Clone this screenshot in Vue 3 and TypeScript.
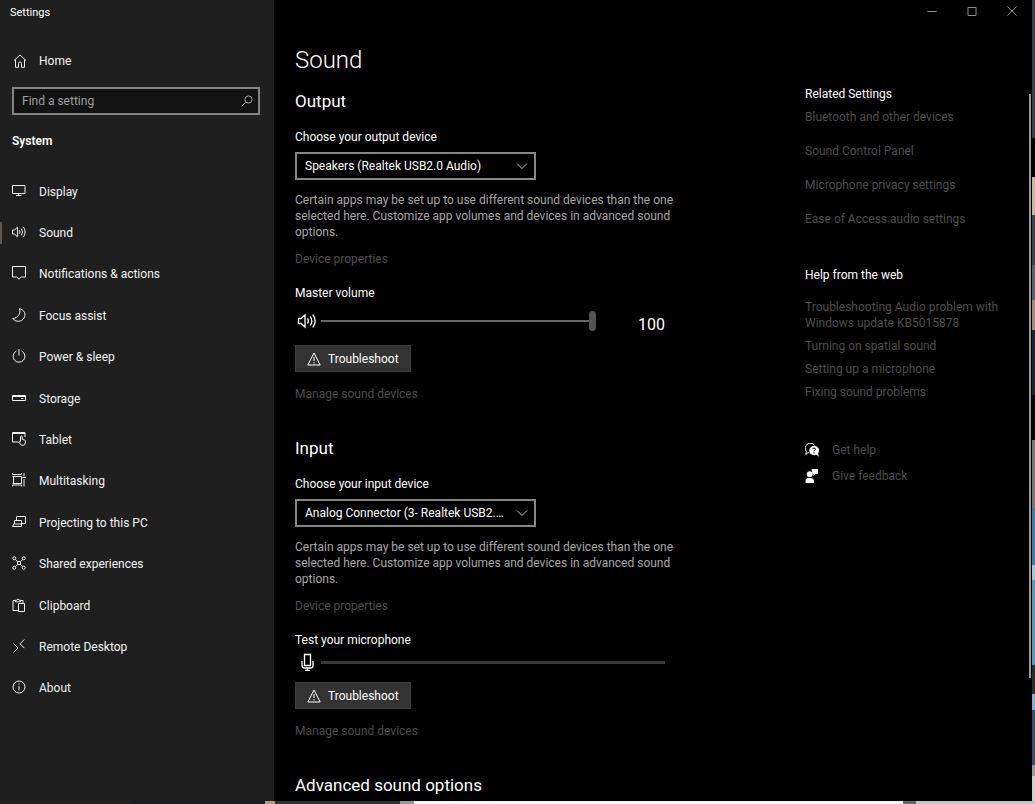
<script setup lang="ts">
import { ref } from 'vue'

interface NavItem {
  id: string
  label: string
}

const navItems: NavItem[] = [
  { id: 'display', label: 'Display' },
  { id: 'sound', label: 'Sound' },
  { id: 'notifications', label: 'Notifications & actions' },
  { id: 'focus', label: 'Focus assist' },
  { id: 'power', label: 'Power & sleep' },
  { id: 'storage', label: 'Storage' },
  { id: 'tablet', label: 'Tablet' },
  { id: 'multitasking', label: 'Multitasking' },
  { id: 'projecting', label: 'Projecting to this PC' },
  { id: 'shared', label: 'Shared experiences' },
  { id: 'clipboard', label: 'Clipboard' },
  { id: 'remote', label: 'Remote Desktop' },
  { id: 'about', label: 'About' },
]

const relatedLinks = [
  'Bluetooth and other devices',
  'Sound Control Panel',
  'Microphone privacy settings',
  'Ease of Access audio settings',
]

const helpLinks = [
  'Troubleshooting Audio problem with Windows update KB5015878',
  'Turning on spatial sound',
  'Setting up a microphone',
  'Fixing sound problems',
]

const active = ref('sound')
const search = ref('')
const volume = ref(100)
const outputDevice = ref('Speakers (Realtek USB2.0 Audio)')
const inputDevice = ref('Analog Connector (3- Realtek USB2.0 Audio)')
</script>

<template>
  <div class="desktop">
    <div class="window">
      <aside class="sidebar">
        <div class="app-title">Settings</div>
        <a href="#" class="home">
          <svg class="icon" viewBox="0 0 14 14"><path d="M1 6.600 7 1l6 5.600M2.500 5.500v7.800h3V9.500q0-1.500 1.500-1.500t1.500 1.500v3.800h3V5.500" /></svg>
          <span>Home</span>
        </a>
        <div class="search">
          <input v-model="search" type="text" placeholder="Find a setting" aria-label="Find a setting" />
          <svg class="search-icon" viewBox="0 0 12 12"><circle cx="7.500" cy="4.500" r="3.600" /><path d="M4.900 7.100.7 11.300" /></svg>
        </div>
        <h2 class="group">System</h2>
        <nav class="nav">
          <a
            v-for="item in navItems"
            :key="item.id"
            href="#"
            :class="{ active: active === item.id }"
            @click.prevent="active = item.id"
          >
            <svg class="icon" viewBox="0 0 14 14">
              <path v-if="item.id === 'display'" d="M.5 1.500h12.500v8H.5zM6.700 9.500v2M4 11.500h5.500" />
              <path v-else-if="item.id === 'sound'" d="M.5 5h2l3-2.800v9.600L2.500 9h-2zM7.300 5.200q1.200 1.800 0 3.600M9.300 3.500q2.400 3.500 0 7M11.300 1.800q3.600 5.200 0 10.400" />
              <path v-else-if="item.id === 'notifications'" d="M.5.500h13v10.500H9.300L7 13.200 4.700 11H.5z" />
              <path v-else-if="item.id === 'focus'" d="M7.500.7C9 5.500 6 10 .7 10.500c3 4 9 3.600 11.300-.5 2.200-3.700.6-8-4.500-9.300z" />
              <path v-else-if="item.id === 'power'" d="M7 0v6.500M4.400 2a5.900 5.900 0 1 0 5.200 0" />
              <path v-else-if="item.id === 'storage'" d="M.5 4.500h13v5H.5zM.5 5.500h13M9 7.500h2.500" />
              <g v-else-if="item.id === 'tablet'">
                <path d="M6 10H.5V.5H13V5M.5 1.500H13" />
                <path d="M8.500 9.500V4.500q.9-1 1.800 0v3l2.400.6q.9.300.8 1.200l-.6 3q-.4.900-1.300.9H9.300L6.500 10q.6-1.300 2-.2" />
              </g>
              <path v-else-if="item.id === 'multitasking'" d="M.5 0v1.500h9V0M1.500 3.500v7M.5 3.500h9v7h-9M.5 13.500V12h9v1.500M12 0v3.500M12 6v7.500M10.500 4.500H14" />
              <path v-else-if="item.id === 'projecting'" d="M4.500 5V1.500h9v7h-4M2.500 5.500h7v3.500h-7zM2.500 8 .5 11.500h9V9" />
              <g v-else-if="item.id === 'shared'">
                <path d="M3.500 3.500 5.500 5.500h3l2-2M3.500 10.500l2-2h3l2 2M5.500 5.500v3M8.500 5.500v3" />
                <circle cx="2.300" cy="2.300" r="1.500" /><circle cx="11.700" cy="2.300" r="1.500" />
                <circle cx="2.300" cy="11.700" r="1.500" /><circle cx="11.700" cy="11.700" r="1.500" />
              </g>
              <path v-else-if="item.id === 'clipboard'" d="M6 12.500H1V2.500h2.500M8.500 2.500H11V5M3.500 3.800V2.200h1.300q1.200-2.600 2.400 0h1.300v1.600zM6.500 5.500h6v8h-6z" />
              <path v-else-if="item.id === 'remote'" d="M1.500 4.500 6 9l-4.500 4.500M12.300.5 8 4.800l4.300 4.300" />
              <path v-else d="M13 7A6 6 0 1 1 1 7a6 6 0 0 1 12 0zM7 6v4.500M7 3.500v1.200" />
            </svg>
            <span>{{ item.label }}</span>
          </a>
        </nav>
      </aside>

      <div class="page">
        <header class="caption">
          <button type="button" aria-label="Minimize"><svg viewBox="0 0 10 10"><path d="M.5 5.500h9" /></svg></button>
          <button type="button" aria-label="Maximize"><svg viewBox="0 0 10 10"><path d="M1 1.500h8v8H1z" /></svg></button>
          <button type="button" aria-label="Close"><svg viewBox="0 0 10 10"><path d="m.5.5 9 9M9.500.5l-9 9" /></svg></button>
        </header>

        <div class="columns">
          <main class="content">
            <h1>Sound</h1>

            <section>
              <h2>Output</h2>
              <label class="label" for="output">Choose your output device</label>
              <div class="select">
                <select id="output" v-model="outputDevice">
                  <option>Speakers (Realtek USB2.0 Audio)</option>
                </select>
                <svg viewBox="0 0 12 8"><path d="m1 1.500 5 5 5-5" /></svg>
              </div>
              <p>Certain apps may be set up to use different sound devices than the one selected here. Customize app volumes and devices in advanced sound options.</p>
              <a href="#" class="props">Device properties</a>
              <label class="label device-label" for="volume">Master volume</label>
              <div class="level volume">
                <svg class="level-icon" viewBox="0 0 20 18"><path d="M1.500 6.500h2.600L8 3v12l-3.900-3.500H1.500zM10.500 6.500q1.800 2.500 0 5M13.200 4.500q3.300 4.500 0 9M15.800 2.500q4.800 6.500 0 13" /></svg>
                <input id="volume" v-model="volume" type="range" min="0" max="100" />
                <output for="volume">{{ volume }}</output>
              </div>
              <button type="button" class="trouble">
                <svg viewBox="0 0 14 14"><path d="M7 1 13.200 13H.8zM7 5v4M7 10.200v1.300" /></svg>
                <span>Troubleshoot</span>
              </button>
              <a href="#" class="manage">Manage sound devices</a>
            </section>

            <section>
              <h2>Input</h2>
              <label class="label" for="input">Choose your input device</label>
              <div class="select">
                <select id="input" v-model="inputDevice">
                  <option>Analog Connector (3- Realtek USB2.0 Audio)</option>
                </select>
                <svg viewBox="0 0 12 8"><path d="m1 1.500 5 5 5-5" /></svg>
              </div>
              <p>Certain apps may be set up to use different sound devices than the one selected here. Customize app volumes and devices in advanced sound options.</p>
              <a href="#" class="props">Device properties</a>
              <div class="label device-label">Test your microphone</div>
              <div class="level mic">
                <svg class="level-icon" viewBox="0 0 20 18"><path d="M7.500 1.500h6v11h-6zM5 8v4.500Q5 15 7.500 15h6q2.500 0 2.500-2.500V8M10.500 15v2.500M8 17.300h5" /></svg>
                <div class="meter" role="meter" aria-label="Microphone level" aria-valuenow="0" aria-valuemin="0" aria-valuemax="100"></div>
              </div>
              <button type="button" class="trouble">
                <svg viewBox="0 0 14 14"><path d="M7 1 13.200 13H.8zM7 5v4M7 10.200v1.300" /></svg>
                <span>Troubleshoot</span>
              </button>
              <a href="#" class="manage">Manage sound devices</a>
            </section>

            <section>
              <h2>Advanced sound options</h2>
            </section>
          </main>

          <aside class="side">
            <h3>Related Settings</h3>
            <div class="related">
              <a v-for="link in relatedLinks" :key="link" href="#">{{ link }}</a>
            </div>
            <h3>Help from the web</h3>
            <div class="help">
              <a v-for="link in helpLinks" :key="link" href="#">{{ link }}</a>
            </div>
            <div class="support">
              <a href="#">
                <svg viewBox="0 0 14 14">
                  <path class="line" d="M4.500 9.800H2.800L.8 11.500l.5-3A4.800 4.800 0 0 1 9.500 2.200" />
                  <path class="solid" d="M9 2.800a4.700 4.700 0 1 0 2.300 8.800l2.700 2.200-1-3.400A4.700 4.700 0 0 0 9 2.800z" />
                  <path class="cut" d="M7.600 6.200q.1-1.200 1.400-1.200t1.400 1.100q0 .8-.8 1.200-.6.400-.6 1M9 9.300v1.200" />
                </svg>
                <span>Get help</span>
              </a>
              <a href="#">
                <svg viewBox="0 0 14 14">
                  <path class="solid" d="M6.500 0H13v5h-2.500L8.500 7V5h-1z" />
                  <circle class="solid" cx="4.700" cy="5.200" r="2.900" />
                  <path class="solid" d="M.5 14v-2Q.7 9 3.700 9h2Q8.800 9 9 12v2z" />
                </svg>
                <span>Give feedback</span>
              </a>
            </div>
          </aside>
        </div>
        <div class="scrollbar"></div>
      </div>
    </div>
  </div>
</template>

<style>
html,
body {
  margin: 0;
  background: #000;
}
</style>

<style scoped>
* {
  box-sizing: border-box;
}

.desktop {
  height: 100vh;
  overflow: hidden;
  padding: 0 3px 3px 0;
  font-family: Roboto, 'Open Sans', sans-serif;
  font-size: 12px;
  line-height: 16px;
  color: #fff;
  background:
    linear-gradient(90deg, #242322 0 130px, #1c1c22 130px 265px, #a89b80 265px 275px, #333 275px 400px, #999 400px 414px, #f4f4f4 414px 903px, #666 903px 916px, #c4c4c4 916px) left bottom / 100% 3px no-repeat,
    linear-gradient(180deg, #3c3e4a 0 138px, #000 138px 177px, #c9b59c 177px 215px, #3a4252 215px 265px, #5a5f72 265px 300px, #a48a74 300px 330px, #1c2338 330px 395px, #050505 395px 440px, #777 440px 508px, #3f7cae 508px 565px, #a9c3cf 565px 580px, #5797bd 580px 665px, #2c2c28 665px 694px, #7db1cc 694px 710px, #35506f 710px 765px, #999 765px 776px, #ccc 776px) right top / 3px 100% no-repeat;
}

a {
  color: inherit;
  text-decoration: none;
}

h1,
h2,
h3,
p {
  margin: 0;
}

svg {
  display: block;
  flex: none;
  fill: none;
  stroke: currentColor;
}

.window {
  display: grid;
  grid-template-columns: 274px 1fr;
  height: 100%;
  overflow: hidden;
  background: #000;
}

.sidebar {
  display: flex;
  flex-direction: column;
  overflow: hidden;
  background: #1f1f1f;
}

.app-title {
  padding: 5px 10px 4px;
  font-size: 11px;
}

.home {
  display: flex;
  align-items: center;
  gap: 12px;
  margin-top: 20px;
  padding: 8px 13px;
  color: #f2f2f2;
}

.icon {
  width: 14px;
  height: 14px;
}

.search {
  display: flex;
  align-items: center;
  height: 28px;
  margin: 10px 14px 0 12px;
  padding-right: 5px;
  border: 2px solid #858585;
  background: #121212;
}

.search input {
  flex: 1;
  min-width: 0;
  height: 100%;
  padding: 0 8px;
  border: 0;
  outline: 0;
  background: transparent;
  color: #fff;
  font: inherit;
}

.search input::placeholder {
  color: #a0a0a0;
  opacity: 1;
}

.search-icon {
  width: 12px;
  height: 12px;
  color: #a8a8a8;
}

.group {
  margin: 18px 12px 0;
  font-size: 12px;
  font-weight: 600;
}

.nav {
  display: flex;
  flex-direction: column;
  flex: none;
  height: 538px;
  margin-top: 22px;
}

.nav a {
  display: flex;
  flex: 1;
  align-items: center;
  gap: 13px;
  padding-left: 9px;
  border-left: 3px solid transparent;
  color: #f2f2f2;
}

.nav .icon {
  margin-bottom: 2px;
}

.nav a.active {
  border-image: linear-gradient(transparent 0 25%, #5c5856 25% 75%, transparent 75%) 1;
  border-image-width: 0 0 0 2px;
}

.page {
  position: relative;
  display: flex;
  flex-direction: column;
  overflow: hidden;
}

.caption {
  display: flex;
  justify-content: flex-end;
  height: 22px;
}

.caption button {
  display: grid;
  place-items: center;
  width: 40px;
  padding: 0;
  border: 0;
  background: transparent;
  color: #8c8c8c;
}

.caption svg {
  width: 10px;
  height: 10px;
}

.columns {
  display: grid;
  grid-template-columns: 1fr 227px;
  padding-left: 21px;
}

.content {
  padding-top: 20px;
}

h1 {
  font-size: 24px;
  font-weight: 300;
  line-height: 36px;
}

.content h2 {
  font-size: 17px;
  font-weight: 400;
  line-height: 24px;
}

section {
  display: flex;
  flex-direction: column;
  align-items: flex-start;
  margin-top: 34px;
}

h1 + section {
  margin-top: 11px;
}

.label {
  margin-top: 16px;
}

.select {
  position: relative;
  width: 241px;
  margin-top: 7px;
}

.select select {
  display: block;
  width: 100%;
  height: 28px;
  padding: 0 26px 0 8px;
  border: 2px solid #858585;
  border-radius: 0;
  appearance: none;
  overflow: hidden;
  text-overflow: ellipsis;
  background: #000;
  color: #fff;
  font: inherit;
}

.select svg {
  position: absolute;
  top: 10px;
  right: 8px;
  width: 12px;
  height: 8px;
  color: #c8c8c8;
  pointer-events: none;
}

p {
  max-width: 388px;
  margin-top: 12px;
  color: #a6a6a6;
}

.props,
.manage {
  color: #4f4d4c;
}

.props {
  margin-top: 11px;
}

.device-label {
  margin-top: 18px;
}

.level {
  display: flex;
  align-items: center;
  width: 370px;
  height: 24px;
}

.volume {
  margin-top: 8px;
}

.mic {
  margin-top: 2px;
}

.level-icon {
  width: 20px;
  height: 18px;
  margin: 0 4px 0 2px;
  stroke-width: 1.3;
}

.level input {
  width: 275px;
  height: 20px;
  margin: 0;
  appearance: none;
  background: linear-gradient(#686665, #686665) center / 100% 2px no-repeat;
}

.level input::-webkit-slider-thumb {
  width: 7px;
  height: 20px;
  border-radius: 4px;
  appearance: none;
  background: #55524f;
}

.level output {
  margin: 8px 0 0 auto;
  font-size: 16px;
}

.meter {
  flex: 1;
  height: 3px;
  background: #3a3a3a;
}

.trouble {
  display: flex;
  align-items: center;
  gap: 7px;
  height: 27px;
  margin-top: 12px;
  padding: 0 11px;
  border: 1px solid #3d3d3d;
  background: #333;
  color: #fff;
  font: inherit;
}

.mic + .trouble {
  margin-top: 8px;
}

.trouble svg {
  width: 14px;
  height: 14px;
}

.manage {
  margin-top: 14px;
}

.side {
  padding: 64px 24px 0 0;
  color: #4f4d4c;
}

h3 {
  color: #fff;
  font-size: 12px;
  font-weight: 400;
}

.related,
.help,
.support {
  display: flex;
  flex-direction: column;
}

.related {
  gap: 18px;
  margin: 7px 0 40px;
}

.help {
  gap: 7px;
  margin-top: 16px;
}

.support {
  gap: 10px;
  margin-top: 42px;
}

.support a {
  display: flex;
  align-items: center;
  gap: 13px;
}

.support svg {
  width: 14px;
  height: 14px;
  color: #fff;
}

.solid {
  fill: #fff;
  stroke: none;
}

.cut {
  stroke: #000;
}

.scrollbar {
  position: absolute;
  top: 94px;
  right: 1px;
  bottom: 123px;
  width: 2px;
  background: #9a9a9a;
}
</style>
